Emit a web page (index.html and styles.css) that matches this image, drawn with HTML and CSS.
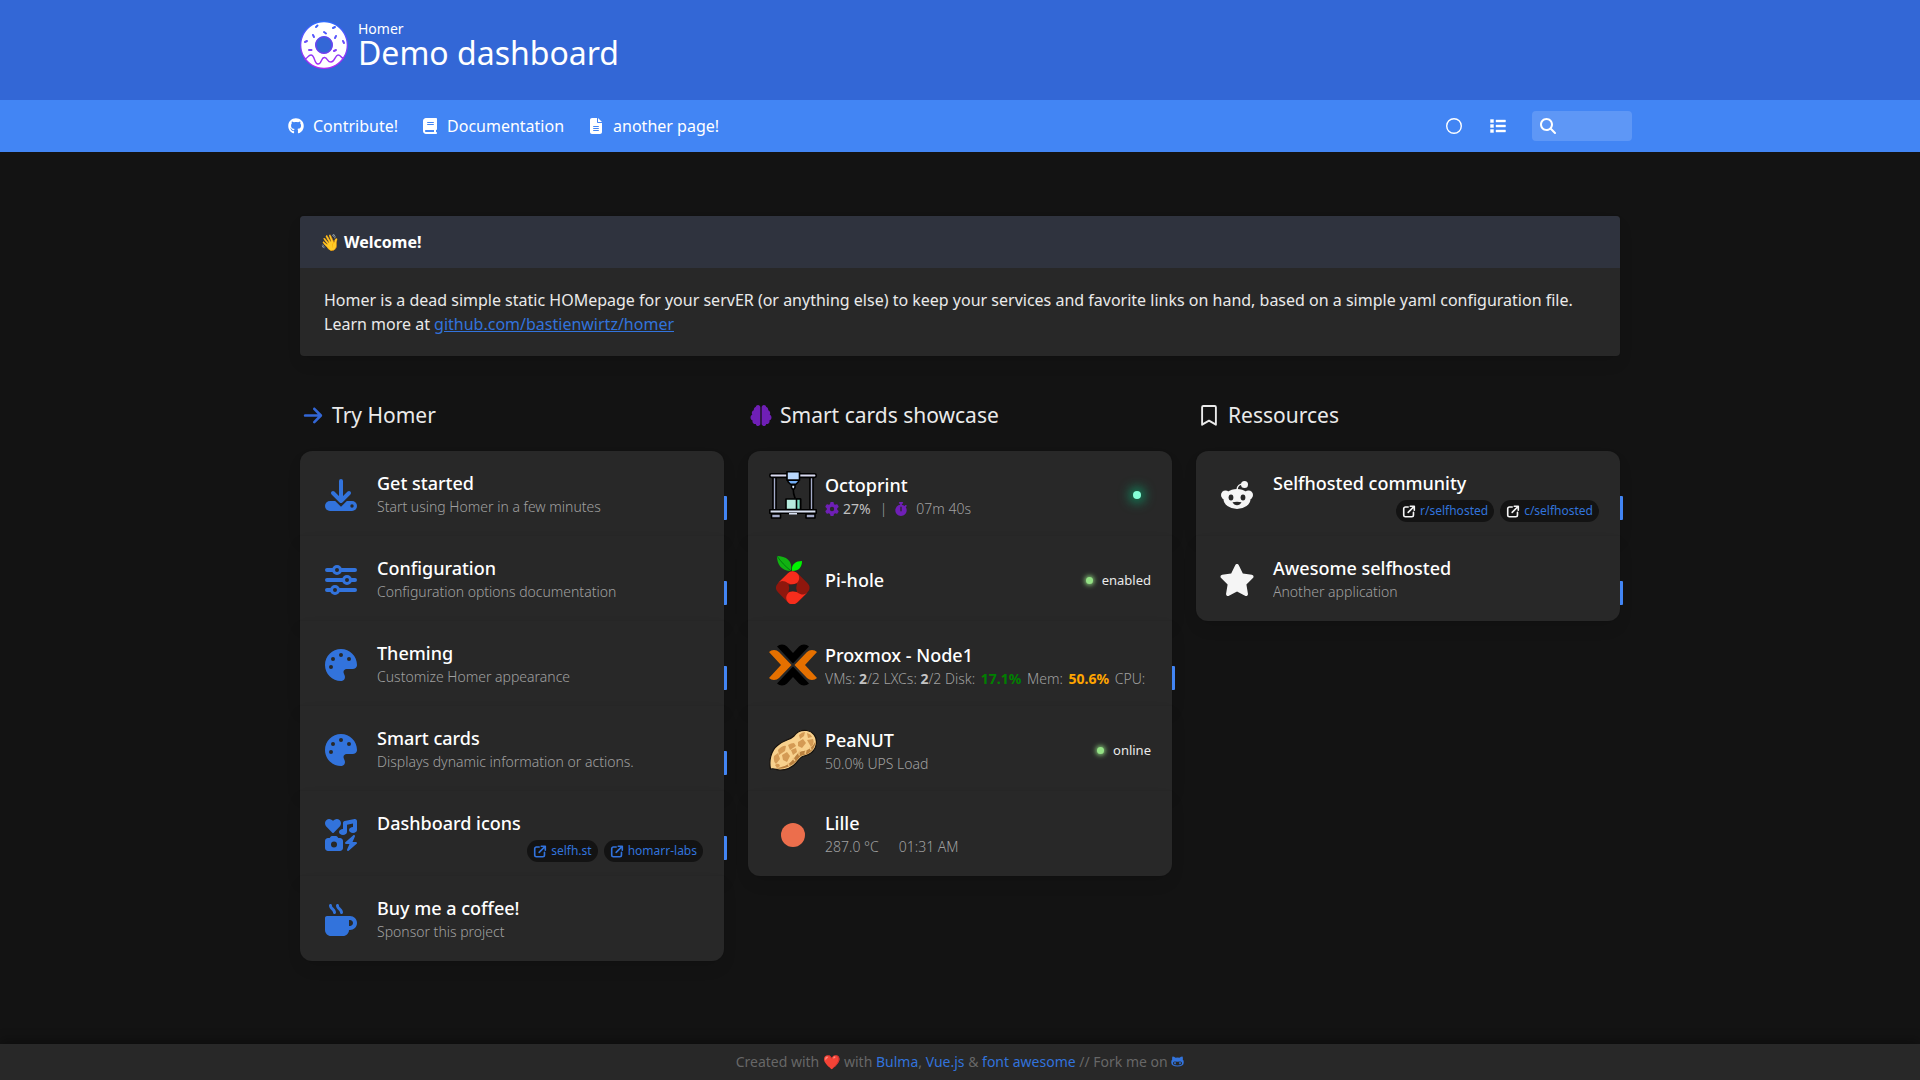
FILE: index.html
```html
<!DOCTYPE html>
<html lang="en">
<head>
<meta charset="utf-8">
<meta name="viewport" content="width=device-width, initial-scale=1">
<title>Demo dashboard | Homer</title>
<link rel="stylesheet" href="styles.css">
</head>
<body>
<svg class="sprite" aria-hidden="true">
  <symbol id="i-external" viewBox="0 0 16 16"><path d="M7 2.500H3.500A2 2 0 0 0 1.500 4.500v8a2 2 0 0 0 2 2h8a2 2 0 0 0 2-2V9M9.500 1.500h5v5M14 2 7 9" fill="none" stroke="currentColor" stroke-width="2" stroke-linecap="round" stroke-linejoin="round"/></symbol>
  <symbol id="i-palette" viewBox="0 0 512 512"><path d="M512 256c0 .9 0 1.800 0 2.700c-.4 36.500-33.600 61.300-70.100 61.300H344c-26.500 0-48 21.500-48 48c0 3.400 .4 6.700 1 9.900c2.100 10.200 6.500 20 10.800 29.900c6.100 13.800 12.100 27.500 12.100 42c0 31.800-21.600 60.700-53.400 62c-3.500 .1-7 .2-10.600 .2C114.600 512 0 397.400 0 256S114.600 0 256 0S512 114.600 512 256zM128 288a32 32 0 1 0 -64 0 32 32 0 1 0 64 0zm0-96a32 32 0 1 0 0-64 32 32 0 1 0 0 64zM288 96a32 32 0 1 0 -64 0 32 32 0 1 0 64 0zm96 96a32 32 0 1 0 0-64 32 32 0 1 0 0 64z"/></symbol>
</svg>

<header class="banner">
  <div class="container banner-inner">
    <svg class="logo" viewBox="0 0 48 48" aria-hidden="true">
      <defs><linearGradient id="ring" x1="0" y1="0" x2="0" y2="1"><stop offset="0" stop-color="#2a6cff"/><stop offset="1" stop-color="#b823f5"/></linearGradient>
      <linearGradient id="wave" gradientUnits="userSpaceOnUse" x1="0" y1="0" x2="0" y2="48"><stop offset="0" stop-color="#2a6cff"/><stop offset="1" stop-color="#b823f5"/></linearGradient></defs>
      <path d="M24 0a24 24 0 1 0 .01 0zM24 16a8 8 0 1 1-.01 0z" fill="url(#ring)" fill-rule="evenodd"/>
      <path d="M24 1.300a22.700 22.700 0 1 0 .01 0zM24 15a9 9 0 1 1-.01 0z" fill="#fff" fill-rule="evenodd"/>
      <circle cx="24" cy="24" r="8" fill="none" stroke="#6348ea" stroke-width="1.200"/>
      <g fill="none" stroke="url(#wave)" stroke-linecap="round">
        <path d="M5 38C8 37 8 34 11 34C15 34 14 43 18 43C22 43 21 36 24.500 36.500C28 37 27 41 31 41C35 41 35 34 38 34C41 34 41 37 43 37" stroke-width="1.400"/>
        <path d="M16 6l1.500-1.500M33 7l2-1M24 11l2 1.500M13 14l1 2M36 15l-1 2M5 21l2-1M43 20l1 2M9 29h2.500M36 29l-2 1" stroke-width="2"/>
      </g>
    </svg>
    <div class="banner-title">
      <span class="banner-sub">Homer</span>
      <h1>Demo dashboard</h1>
    </div>
  </div>
</header>

<nav class="navbar" aria-label="main navigation">
  <div class="container navbar-inner">
    <div class="nav-links">
      <a href="#"><svg class="nav-icon" viewBox="0 0 496 512"><path d="M244.800 8C106.100 8 0 113.300 0 252c0 110.900 69.800 205.800 169.500 239.200 12.800 2.300 17.300-5.600 17.300-12.100 0-6.200-.3-40.400-.3-61.400 0 0-70 15-84.700-29.800 0 0-11.400-29.100-27.800-36.600 0 0-22.900-15.700 1.600-15.400 0 0 24.900 2 38.600 25.800 21.900 38.600 58.600 27.500 72.900 20.900 2.300-16 8.800-27.100 16-33.700-55.900-6.200-112.300-14.300-112.300-110.500 0-27.500 7.600-41.300 23.600-58.900-2.600-6.500-11.100-33.300 2.600-67.900 20.900-6.500 69 27 69 27 20-5.600 41.500-8.500 62.800-8.500s42.800 2.900 62.800 8.500c0 0 48.100-33.600 69-27 13.700 34.700 5.200 61.400 2.600 67.900 16 17.700 25.800 31.500 25.800 58.900 0 96.500-58.900 104.200-114.800 110.500 9.200 7.900 17 22.900 17 46.400 0 33.700-.3 75.400-.3 83.600 0 6.500 4.600 14.400 17.300 12.100C428.200 457.800 496 362.900 496 252 496 113.300 383.500 8 244.800 8z"/></svg><span>Contribute!</span></a>
      <a href="#"><svg class="nav-icon" viewBox="0 0 448 512"><path d="M96 0C43 0 0 43 0 96V416c0 53 43 96 96 96H384h32c17.700 0 32-14.300 32-32s-14.300-32-32-32V384c17.700 0 32-14.300 32-32V32c0-17.700-14.300-32-32-32H384 96zm0 384H352v64H96c-17.700 0-32-14.300-32-32s14.300-32 32-32zm32-240c0-8.800 7.200-16 16-16H336c8.800 0 16 7.200 16 16s-7.200 16-16 16H144c-8.800 0-16-7.200-16-16zm16 48H336c8.800 0 16 7.200 16 16s-7.200 16-16 16H144c-8.800 0-16-7.200-16-16s7.200-16 16-16z"/></svg><span>Documentation</span></a>
      <a href="#"><svg class="nav-icon" viewBox="0 0 384 512"><path d="M64 0C28.700 0 0 28.700 0 64V448c0 35.300 28.700 64 64 64H320c35.300 0 64-28.700 64-64V160H256c-17.700 0-32-14.300-32-32V0H64zM256 0V128H384L256 0zM112 256H272c8.800 0 16 7.200 16 16s-7.200 16-16 16H112c-8.800 0-16-7.200-16-16s7.200-16 16-16zm0 64H272c8.800 0 16 7.200 16 16s-7.200 16-16 16H112c-8.800 0-16-7.200-16-16s7.200-16 16-16zm0 64H272c8.800 0 16 7.200 16 16s-7.200 16-16 16H112c-8.800 0-16-7.200-16-16s7.200-16 16-16z"/></svg><span>another page!</span></a>
    </div>
    <div class="nav-tools">
      <button type="button" aria-label="Toggle theme"><svg class="nav-icon" viewBox="0 0 16 16"><circle cx="8" cy="8" r="7.300" fill="none" stroke="currentColor" stroke-width="1.400"/></svg></button>
      <button type="button" aria-label="Toggle layout"><svg class="nav-icon" viewBox="0 0 16 16"><path d="M.5 1.500h3v3h-3zM.5 6.500h3v3h-3zM.5 11.500h3v3h-3zM6 2h9.500v2H6zM6 7h9.500v2H6zM6 12h9.500v2H6z" stroke="currentColor" stroke-width=".4" stroke-linejoin="round"/></svg></button>
      <label class="search"><svg class="search-icon" viewBox="0 0 512 512" aria-hidden="true"><path d="M416 208c0 45.900-14.900 88.300-40 122.700L502.600 457.400c12.500 12.500 12.500 32.800 0 45.300s-32.800 12.500-45.300 0L330.700 376c-34.400 25.200-76.800 40-122.700 40C93.100 416 0 322.900 0 208S93.100 0 208 0S416 93.100 416 208zM208 352a144 144 0 1 0 0-288 144 144 0 1 0 0 288z"/></svg><input type="search" aria-label="Search"></label>
    </div>
  </div>
</nav>

<main class="container main">
  <article class="message">
    <div class="message-header">👋 Welcome!</div>
    <div class="message-body">Homer is a dead simple static HOMepage for your servER (or anything else) to keep your services and favorite links on hand, based on a simple yaml configuration file.<br>Learn more at <a href="#">github.com/bastienwirtz/homer</a></div>
  </article>

  <div class="columns">
    <section class="column">
      <h2><svg class="group-icon blue" viewBox="0 0 448 512"><path d="M438.600 278.600c12.500-12.500 12.500-32.800 0-45.300l-160-160c-12.500-12.500-32.800-12.500-45.300 0s-12.500 32.800 0 45.300L338.800 224 32 224c-17.700 0-32 14.300-32 32s14.300 32 32 32l306.700 0L233.400 393.400c-12.500 12.500-12.500 32.800 0 45.300s32.800 12.500 45.300 0l160-160z"/></svg>Try Homer</h2>
      <div class="cards">
        <article class="card">
          <svg class="card-icon" viewBox="0 0 32 32"><path d="M5 22h22a5 5 0 0 1 0 10H5a5 5 0 0 1 0-10z"/><circle cx="27" cy="27" r="1.700" fill="#282828"/><path d="M7.500 14 16 22.500 24.500 14" fill="none" stroke="#282828" stroke-width="7.500"/><path d="M16 2v20M8 14l8 8 8-8" fill="none" stroke="currentColor" stroke-width="4" stroke-linecap="round" stroke-linejoin="round"/></svg>
          <div class="card-body"><p class="title">Get started</p><p class="subtitle">Start using Homer in a few minutes</p></div>
          <span class="mark"></span>
        </article>
        <article class="card">
          <svg class="card-icon" viewBox="0 0 32 32"><g fill="#282828" stroke="currentColor" stroke-linecap="round" stroke-width="4"><path d="M2 6h28M2 16h28M2 26h28"/><circle cx="12" cy="6" r="3.500" stroke-width="3"/><circle cx="22" cy="16" r="3.500" stroke-width="3"/><circle cx="10" cy="26" r="3.500" stroke-width="3"/></g></svg>
          <div class="card-body"><p class="title">Configuration</p><p class="subtitle">Configuration options documentation</p></div>
          <span class="mark"></span>
        </article>
        <article class="card">
          <svg class="card-icon"><use href="#i-palette"/></svg>
          <div class="card-body"><p class="title">Theming</p><p class="subtitle">Customize Homer appearance</p></div>
          <span class="mark"></span>
        </article>
        <article class="card">
          <svg class="card-icon"><use href="#i-palette"/></svg>
          <div class="card-body"><p class="title">Smart cards</p><p class="subtitle">Displays dynamic information or actions.</p></div>
          <span class="mark"></span>
        </article>
        <article class="card">
          <svg class="card-icon" viewBox="0 0 512 512"><path d="M500.300 7.300C507.700 13.300 512 22.400 512 32v144c0 26.500-28.700 48-64 48s-64-21.500-64-48s28.700-48 64-48V71L352 90.200V208c0 26.500-28.700 48-64 48s-64-21.500-64-48s28.700-48 64-48V64c0-15.300 10.800-28.400 25.700-31.400l160-32c9.400-1.900 19.100 .6 26.600 6.600zM74.700 304l11.800-17.800c5.900-8.900 15.900-14.200 26.600-14.200h61.700c10.700 0 20.700 5.300 26.600 14.200L213.300 304H240c26.500 0 48 21.500 48 48V464c0 26.500-21.500 48-48 48H48c-26.500 0-48-21.500-48-48V352c0-26.500 21.500-48 48-48H74.700zM192 408a48 48 0 1 0 -96 0 48 48 0 1 0 96 0zM478.700 278.300L440.300 368H496c6.700 0 12.600 4.100 15 10.400s.6 13.300-4.400 17.700l-128 112c-5.600 4.900-13.900 5.300-19.900 .9s-8.200-12.400-5.300-19.200L391.700 400H336c-6.700 0-12.600-4.100-15-10.400s-.6-13.300 4.400-17.700l128-112c5.600-4.900 13.900-5.300 19.900-.9s8.200 12.400 5.300 19.200zm-339-59.200c-6.500 6.500-17 6.500-23 0L19.900 119.200c-28-29-26.500-76.900 5-103.900c27-23.500 68.400-19 93.400 6.500l10 10.500 9.500-10.500c25-25.500 65.900-30 93.900-6.500c31 27 32.500 74.900 4.500 103.900l-96.400 99.900z"/></svg>
          <div class="card-body"><p class="title">Dashboard icons</p>
            <div class="tags"><a class="tag" href="#"><svg class="tag-icon"><use href="#i-external"/></svg>selfh.st</a><a class="tag" href="#"><svg class="tag-icon"><use href="#i-external"/></svg>homarr-labs</a></div></div>
          <span class="mark"></span>
        </article>
        <article class="card">
          <svg class="card-icon" viewBox="0 0 512 512"><path d="M88 0C74.700 0 64 10.700 64 24c0 38.900 23.400 59.400 39.100 73.100l1.100 1C120.500 112.300 128 119.900 128 136c0 13.300 10.700 24 24 24s24-10.700 24-24c0-38.900-23.400-59.400-39.100-73.100l-1.100-1C119.500 47.700 112 40.100 112 24c0-13.300-10.700-24-24-24zM32 192c-17.700 0-32 14.300-32 32V416c0 53 43 96 96 96H288c53 0 96-43 96-96h16c61.900 0 112-50.100 112-112s-50.100-112-112-112H352 32zm352 64h16c26.500 0 48 21.500 48 48s-21.500 48-48 48H384V256zM224 24c0-13.300-10.700-24-24-24s-24 10.700-24 24c0 38.900 23.400 59.400 39.100 73.100l1.100 1C232.500 112.300 240 119.900 240 136c0 13.300 10.700 24 24 24s24-10.700 24-24c0-38.900-23.400-59.400-39.100-73.100l-1.100-1C231.500 47.700 224 40.100 224 24z"/></svg>
          <div class="card-body"><p class="title">Buy me a coffee!</p><p class="subtitle">Sponsor this project</p></div>
        </article>
      </div>
    </section>

    <section class="column">
      <h2><svg class="group-icon purple" viewBox="0 0 512 512"><path d="M184 0c30.900 0 56 25.100 56 56V456c0 30.900-25.100 56-56 56c-28.900 0-52.700-21.900-55.700-50.100c-5.200 1.400-10.700 2.100-16.300 2.100c-35.300 0-64-28.700-64-64c0-7.400 1.300-14.600 3.600-21.200C21.400 367.400 0 338.200 0 304c0-31.900 18.700-59.500 45.800-72.300C37.100 220.800 32 207 32 192c0-30.700 21.600-56.300 50.400-62.600C80.800 123.900 80 118 80 112c0-29.900 20.600-55.100 48.300-62.100C131.300 21.900 155.100 0 184 0zM328 0c28.900 0 52.600 21.900 55.700 49.900c27.800 7 48.300 32.100 48.300 62.100c0 6-.8 11.900-2.400 17.400c28.800 6.200 50.400 31.900 50.400 62.600c0 15-5.100 28.800-13.800 39.700C493.300 244.500 512 272.100 512 304c0 34.200-21.400 63.400-51.600 74.800c2.300 6.600 3.600 13.800 3.600 21.200c0 35.300-28.700 64-64 64c-5.600 0-11.100-.7-16.300-2.100c-3 28.200-26.800 50.100-55.700 50.100c-30.900 0-56-25.100-56-56V56c0-30.900 25.100-56 56-56z"/></svg>Smart cards showcase</h2>
      <div class="cards">
        <article class="card">
          <svg class="card-image" viewBox="0 0 48 48"><g stroke="#000" stroke-width="1.600" stroke-linejoin="round"><path d="M4 6h3v33H4zM41 6h3v33h-3z" fill="#a4abc8"/><rect x=".8" y="2.800" width="46.400" height="3.600" rx="1.600" fill="#d9daf0"/><path d="M18 .8h12.500v8.400H18z" fill="#b9d7fb"/><path d="M19 9.200h10.500v1.500l-2.500 2.500h-5.500L19 10.700z" fill="#73aef5"/><path d="M22.500 14h3.500v2.500l-1 1.500h-1.500l-1-1.500z" fill="#dceaff"/><path d="M24.200 18c0 5 1 7 2 9.500" fill="none"/><path d="M17 28h14.500v10.500H17z" fill="#b6ebdd"/><path d="M27.500 28h4v10.500h-4z" fill="#79dfc0"/><rect x=".8" y="38.800" width="46.400" height="3.400" fill="#d9e1f2"/><path d="M2.500 43h9v4h-9zM37 43h9v4h-9z" fill="#a4abc8"/></g><path d="M20 42h8v1.500h-8z" fill="#d9e1f2"/></svg>
          <div class="card-body card-body--image"><p class="title">Octoprint</p><p class="subtitle stats"><svg class="stat-icon" viewBox="0 0 512 512"><path d="M495.900 166.600c3.200 8.700 .5 18.400-6.400 24.600l-43.300 39.400c1.100 8.300 1.700 16.800 1.700 25.400s-.6 17.100-1.700 25.400l43.300 39.400c6.900 6.200 9.600 15.900 6.400 24.600c-4.400 11.900-9.700 23.300-15.800 34.300l-4.700 8.100c-6.600 11-14 21.400-22.100 31.200c-5.900 7.200-15.700 9.600-24.500 6.800l-55.700-17.700c-13.400 10.300-28.200 18.900-44 25.400l-12.500 57.100c-2 9.100-9 16.300-18.200 17.800c-13.800 2.300-28 3.500-42.500 3.500s-28.700-1.200-42.500-3.500c-9.200-1.500-16.200-8.700-18.200-17.800l-12.500-57.100c-15.800-6.500-30.600-15.100-44-25.400L83.100 425.900c-8.800 2.800-18.600 .3-24.500-6.800c-8.100-9.800-15.500-20.200-22.100-31.200l-4.700-8.100c-6.100-11-11.400-22.400-15.800-34.300c-3.200-8.700-.5-18.400 6.400-24.600l43.300-39.400C64.600 273.100 64 264.600 64 256s.6-17.100 1.700-25.400L22.400 191.200c-6.900-6.200-9.600-15.900-6.400-24.600c4.400-11.900 9.700-23.300 15.800-34.300l4.700-8.100c6.600-11 14-21.400 22.100-31.200c5.900-7.200 15.700-9.600 24.500-6.800l55.700 17.700c13.400-10.300 28.200-18.900 44-25.400l12.500-57.100c2-9.100 9-16.300 18.200-17.800C227.300 1.200 241.500 0 256 0s28.700 1.200 42.500 3.500c9.200 1.500 16.200 8.700 18.200 17.800l12.500 57.100c15.800 6.500 30.600 15.100 44 25.400l55.700-17.700c8.800-2.800 18.600-.3 24.500 6.800c8.100 9.800 15.500 20.200 22.100 31.200l4.700 8.100c6.100 11 11.400 22.400 15.800 34.300zM256 336a80 80 0 1 0 0-160 80 80 0 1 0 0 160z"/></svg><span class="percent">27%</span><span class="divider">|</span><svg class="stat-icon" viewBox="0 0 448 512"><path d="M176 0c-17.700 0-32 14.300-32 32s14.300 32 32 32h16V98.400C92.300 113.800 16 200 16 304c0 114.900 93.100 208 208 208s208-93.100 208-208c0-41.800-12.300-80.700-33.500-113.200l24.100-24.100c12.500-12.500 12.500-32.800 0-45.300s-32.800-12.500-45.300 0L355.700 143c-28.100-23-62.200-38.800-99.700-44.600V64h16c17.700 0 32-14.300 32-32s-14.300-32-32-32H176zm72 192V320c0 13.300-10.700 24-24 24s-24-10.700-24-24V192c0-13.300 10.700-24 24-24s24 10.700 24 24z"/></svg><span class="time">07m 40s</span></p></div>
          <span class="dot dot--octo"></span>
        </article>
        <article class="card">
          <svg class="card-image" viewBox="0 0 48 48"><path d="M22 15C12 15 8 8 8 0c9 0 16 5 14 15z" fill="#12b212"/><path d="M23 15C22 8 27 5 33 5c0 6-3 10-10 10z" fill="#00f400"/><path d="M8 0c4 6 8 10 14 15" fill="none" stroke="#007a10"/><path d="M23.700 15.500c2 0 4 1 5.300 2.300l9.300 9.300c3 3 3 6.500 0 9.500l-9.300 9.300c-3 3-7.500 3-10.500 0l-9.300-9.300c-3-3-3-6.500 0-9.500l9.300-9.300c1.300-1.300 3-2.300 5.200-2.300z" fill="#8f170d"/><path d="M9 27L19 17.300A6.500 6.500 0 1 1 23.700 28.300C18.500 28.300 18 25 13 25Q10.500 25.300 9 27z" fill="#f62d1c"/><path d="M9 27L19 17.300A6.500 6.500 0 1 1 23.700 28.300C18.500 28.300 18 25 13 25Q10.500 25.300 9 27z" fill="#f62d1c" transform="rotate(180 23.700 31.800)"/><path d="M19.500 28.500q4 .5 8.500-1-1.500 4 0 8.500-4-1.500-8.500 0 1.500-4 0-7.500z" fill="#282828"/></svg>
          <div class="card-body"><p class="title">Pi-hole</p></div>
          <span class="status"><span class="dot"></span>enabled</span>
        </article>
        <article class="card">
          <svg class="card-image" viewBox="0 0 48 48"><path d="M8 5.500Q10 3.500 13 3.500Q16 3.500 18 5.500L24 12 30 5.500Q32 3.500 35 3.500Q38 3.500 40 5.500L24 22.500zM8 42.500Q10 44.500 13 44.500Q16 44.500 18 42.500L24 36 30 42.500Q32 44.500 35 44.500Q38 44.500 40 42.500L24 25.500z"/><path d="M0 11Q2 9 5 9Q8 9 10 11L22.500 24 10 37Q8 39 5 39Q2 39 0 37L12 24zM48 11Q46 9 43 9Q40 9 38 11L25.500 24 38 37Q40 39 43 39Q46 39 48 37L36 24z" fill="#e57000"/></svg>
          <div class="card-body card-body--image"><p class="title">Proxmox - Node1</p><p class="subtitle">VMs: <strong>2</strong>/2 LXCs: <strong>2</strong>/2 Disk: <strong class="ok">17.1%</strong> Mem: <strong class="warn">50.6%</strong> CPU:</p></div>
          <span class="mark"></span>
        </article>
        <article class="card">
          <svg class="card-image" viewBox="0 0 48 48"><path d="M1.500 43C0 36 1 25 9 19c6-5 12-5 16-9C29 4 34 4 38 4.500c6 1 9.500 6 9.500 11.500C47.500 23 42 29 35 30c-3 .5-4 2-7 6-5 6-12 8-17 8-4 0-5-2-9.500-1z" fill="#f8d18d" stroke="#17120d" stroke-width="1.200"/><path d="M46.500 15c0 7-5 13-12 14-4 1-5 4-8 7-5 5-14 8-20 6 10-1 14-4 18-9 3-4 5-8 10-8 6-1 10-5 12-10z" fill="#b9803f"/><path d="M30.500 29.500c-1-2-.5-4 1-5M36 28l1-4M42 24l-1-3M20 40l-1-3M26 35l-2-3" fill="none" stroke="#f0c27c" stroke-width="1.500"/><path d="M9 24q5-5 8-4l-1 5-6 4zM19 19q3-2 6-2l2 3-6 4zM5 30l4-3 2 6-4 5q-3-3-2-8zM13 29l5-3 3 4-3 6-4-2zM22 24l5-2 1 4-4 3zM30 9q3-3 6-3l-1 4-4 3zM38 7q4 1 5 4l-4 1zM29 16l5-3 3 4-4 5-4-2zM38 14l6-1q2 5-2 8zM6 39q4-3 5 1l-3 2z" fill="#d49a54"/></svg>
          <div class="card-body card-body--image"><p class="title">PeaNUT</p><p class="subtitle">50.0% UPS Load</p></div>
          <span class="status"><span class="dot"></span>online</span>
        </article>
        <article class="card">
          <svg class="card-image" viewBox="0 0 48 48"><circle cx="24" cy="24" r="12" fill="#ec6e4c"/></svg>
          <div class="card-body"><p class="title">Lille</p><p class="subtitle weather"><span>287.0 °C</span><span>01:31 AM</span></p></div>
        </article>
      </div>
    </section>

    <section class="column">
      <h2><svg class="group-icon" viewBox="0 0 384 512"><path d="M56 24h272a32 32 0 0 1 32 32v424L192 382 24 480V56a32 32 0 0 1 32-32z" fill="none" stroke="currentColor" stroke-width="46" stroke-linejoin="round"/></svg>Ressources</h2>
      <div class="cards cards--white">
        <article class="card">
          <svg class="card-icon" viewBox="0 0 32 32"><circle cx="4.500" cy="16" r="4.500"/><circle cx="27.500" cy="16" r="4.500"/><ellipse cx="16" cy="20" rx="13.500" ry="10"/><circle cx="23.500" cy="5.500" r="3.500"/><path d="M16 11c0-4 3-6 6-6" fill="none" stroke="currentColor" stroke-width="1.500"/><g fill="#282828"><ellipse cx="10" cy="18.500" rx="2.400" ry="3"/><ellipse cx="22" cy="18.500" rx="2.400" ry="3"/><path d="M11.500 23.300q4.500-1 9 0q-1.500 3-4.500 3t-4.500-3z"/></g></svg>
          <div class="card-body"><p class="title">Selfhosted community</p>
            <div class="tags"><a class="tag" href="#"><svg class="tag-icon"><use href="#i-external"/></svg>r/selfhosted</a><a class="tag" href="#"><svg class="tag-icon"><use href="#i-external"/></svg>c/selfhosted</a></div></div>
          <span class="mark"></span>
        </article>
        <article class="card">
          <svg class="card-icon" viewBox="24 0 528 512"><path d="M316.900 18C311.600 7 300.400 0 288.100 0s-23.400 7-28.800 18L195 150.300 51.400 171.500c-12 1.800-22 10.200-25.700 21.700s-.7 24.200 7.900 32.700L137.800 329 113.200 474.700c-2 12 3 24.200 12.900 31.300s23 8 33.800 2.300l128.300-68.500 128.300 68.500c10.800 5.700 23.900 4.900 33.800-2.300s14.900-19.300 12.900-31.300L438.500 329 542.700 225.900c8.600-8.500 11.700-21.200 7.900-32.700s-13.700-19.900-25.700-21.700L381.200 150.300 316.900 18z"/></svg>
          <div class="card-body"><p class="title">Awesome selfhosted</p><p class="subtitle">Another application</p></div>
          <span class="mark"></span>
        </article>
      </div>
    </section>
  </div>
</main>

<footer class="footer">
  <p>Created with ❤️ with <a href="#">Bulma</a>, <a href="#">Vue.js</a> &amp; <a href="#">font awesome</a> // Fork me on <a href="#" aria-label="GitHub"><svg class="foot-icon" viewBox="0 0 26 22"><path d="M3 1q3 0 6 2.500 4-1 8 0Q20 1 23 1q1.500 3 .5 6 2.500 2 2 6.500Q25 21 13 21T.5 13.500Q0 9 2.500 7 1.500 4 3 1zM7 11q-3 0-3 3.500 0 4.500 9 4.500t9-4.500Q22 11 19 11t-6 .5Q10 11 7 11z" fill-rule="evenodd"/><ellipse cx="8" cy="14.500" rx="1.700" ry="2.300"/><ellipse cx="18" cy="14.500" rx="1.700" ry="2.300"/></svg></a></p>
</footer>
</body>
</html>
```
FILE: styles.css
```css
* { box-sizing: border-box; }

body {
  margin: 0;
  min-height: 100vh;
  display: flex;
  flex-direction: column;
  background: #131313;
  color: #eaeaea;
  font: 16px/24px "Noto Sans", "Noto Color Emoji", sans-serif;
}

h1, h2, p { margin: 0; font-weight: 400; }
a { color: #3273dc; text-decoration: none; }
svg { display: block; flex: none; fill: currentColor; }
.sprite { position: absolute; width: 0; height: 0; }

.container {
  width: 100%;
  max-width: 1344px;
  margin: 0 auto;
  padding: 0 12px;
}

.banner { background: #3367d6; color: #fff; min-height: 100px; }
.banner-inner { display: flex; align-items: center; gap: 10px; padding-top: 20px; }
.logo { width: 48px; height: 48px; }
.banner-title { padding-bottom: 2px; }
.banner-sub { display: block; font-size: 14px; line-height: 18px; }
h1 { font-size: 32px; line-height: 30px; }

.navbar { background: #4285f4; color: #fff; }
.navbar-inner {
  display: flex;
  flex-wrap: wrap;
  justify-content: space-between;
  min-height: 52px;
  padding: 0;
}
.nav-links { display: flex; margin-left: -13px; }
.nav-links a {
  display: flex;
  align-items: center;
  gap: 7px;
  padding: 0 11px;
  color: #fff;
}
.nav-icon { width: 20px; height: 16px; }
.nav-tools { display: flex; align-items: center; }
.nav-tools button {
  padding: 12px;
  border: 0;
  background: none;
  color: #fff;
}
.search {
  display: flex;
  align-items: center;
  gap: 8px;
  width: 100px;
  height: 30px;
  margin-left: 12px;
  padding: 0 8px;
  border-radius: 4px;
  background: #5e97f6;
}
.search-icon { width: 16px; height: 16px; }
.search input {
  flex: 1;
  min-width: 0;
  border: 0;
  outline: 0;
  background: none;
  color: #fff;
  font: inherit;
}

.main { flex: 1; padding-top: 64px; padding-bottom: 83px; }

.message {
  border-radius: 4px;
  overflow: hidden;
  background: #282828;
  box-shadow: 0 8px 16px -2px rgba(10, 10, 10, .1), 0 0 0 1px rgba(10, 10, 10, .02);
}
.message-header {
  padding: 14px 20px;
  background: #2f333e;
  color: #fff;
  font-weight: 700;
}
.message-body { padding: 20px 24px; }
.message-body a { text-decoration: underline; }

.columns {
  display: grid;
  grid-template-columns: repeat(3, 1fr);
  gap: 24px;
  margin-top: 44px;
}
h2 {
  display: flex;
  align-items: center;
  gap: 8px;
  padding-left: 2px;
  margin-bottom: 20px;
  font-size: 21px;
  line-height: 31px;
}
.group-icon { width: 22px; height: 21px; }
.blue { color: #3367d6; }
.purple { color: #6f1fb6; }

.card {
  position: relative;
  display: flex;
  align-items: center;
  min-height: 85px;
  padding: 20px 21px 17px;
  background: #282828;
  box-shadow: 0 8px 16px -2px rgba(10, 10, 10, .1), 0 0 0 1px rgba(10, 10, 10, .02);
}
.card:first-child { border-radius: 12px 12px 0 0; }
.card:last-child { border-radius: 0 0 12px 12px; }
.card-icon { width: 40px; height: 32px; margin-right: 16px; color: #3273dc; }
.cards--white .card-icon, .cards--white .tag-icon { color: #f5f5f5; }
.card-image { width: 48px; height: 48px; margin-right: 8px; color: #000; }
.card-body { flex: 1; min-width: 0; padding-bottom: 1px; }
.card-body--image { padding: 2px 0 0; margin-bottom: -1px; }
.title { color: #fff; font-size: 18px; line-height: 24px; font-weight: 500; }
.subtitle {
  margin-top: 1px;
  color: #a0a0a0;
  font-size: 14px;
  line-height: 22px;
  font-weight: 300;
  white-space: nowrap;
  overflow: hidden;
}
.subtitle strong { color: #c4c4c4; font-weight: 700; }
.subtitle .ok, .subtitle .warn { margin: 0 2px; }
.subtitle .ok { color: #008000; }
.subtitle .warn { color: #ffa500; }
.stats { display: flex; align-items: center; gap: 4px; }
.stat-icon { width: 14px; height: 14px; color: #6f1fb6; }
.percent { color: #c0c0c0; font-weight: 400; }
.divider { margin: 0 3px 0 5px; }
.time { margin-left: 4px; }
.weather { display: flex; gap: 20px; }
.mark {
  position: absolute;
  left: 100%;
  bottom: 16px;
  width: 3px;
  height: 24px;
  border-radius: 0 1px 1px 0;
  background: #4285f4;
}

.tags { display: flex; justify-content: flex-end; gap: 6px; margin: 5px 0 -4px; }
.tag {
  display: flex;
  align-items: center;
  gap: 4px;
  height: 22px;
  padding: 0 6px;
  border-radius: 11px;
  background: #131313;
  font-size: 12px;
}
.tag-icon { width: 14px; height: 13px; }

.status { display: flex; align-items: center; gap: 9px; color: #eaeaea; font-size: 13px; line-height: 20px; }
.dot {
  width: 7px;
  height: 7px;
  border-radius: 50%;
  background: #94e185;
  box-shadow: 0 0 5px 1px #94e185;
}
.dot--octo {
  width: 8px;
  height: 8px;
  margin-right: 10px;
  background: #85ffd8;
  box-shadow: 0 0 12px 3px #0b9a68;
}

.footer {
  padding: 6px 24px;
  background: #282828;
  color: #676767;
  font-size: 14px;
  text-align: center;
  box-shadow: 0 -4px 12px rgba(0, 0, 0, .3);
}
.foot-icon { display: inline-block; width: 13px; height: 11px; vertical-align: 0; }

@media (max-width: 900px) {
  .columns { grid-template-columns: 1fr; }
}
```
